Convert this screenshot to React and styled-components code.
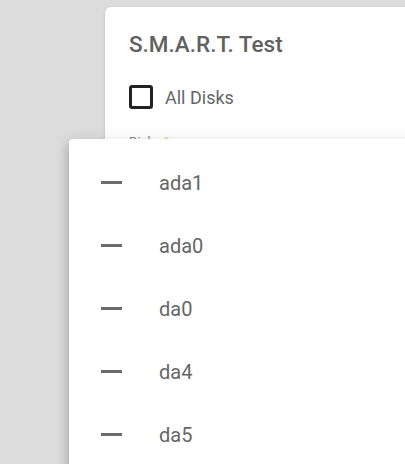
import React from "react";
import styled, { createGlobalStyle } from "styled-components";

const GlobalStyle = createGlobalStyle`
  html, body {
    margin: 0;
    padding: 0;
    background: #dcdcdc;
    font-family: Roboto, "Liberation Sans", sans-serif;
    overflow: hidden;
  }
`;

const Page = styled.div`
  position: relative;
  width: 405px;
  height: 464px;
  padding: 7px 0 0 105px;
  box-sizing: border-box;
  overflow: hidden;
`;

const Card = styled.div`
  background: #fff;
  border-radius: 6px 0 0 0;
  height: 500px;
  padding: 23px 24px 0 24px;
  box-sizing: border-box;
  box-shadow: 0 1px 3px rgba(0, 0, 0, 0.15);
`;

const Title = styled.h2`
  margin: 0;
  font-size: 22.5px;
  font-weight: 500;
  color: #616161;
  line-height: 28px;
`;

const CheckRow = styled.label`
  display: flex;
  align-items: center;
  gap: 12px;
  margin-top: 27px;
  font-size: 18px;
  color: #666;
`;

const Box = styled.span`
  width: 18px;
  height: 18px;
  border: 3px solid #222;
  border-radius: 3px;
`;

const FieldLabel = styled.div`
  margin-top: 25px;
  font-size: 13px;
  color: #888;
`;

const Star = styled.span`
  color: #f0b400;
  margin-left: 3px;
`;

const Menu = styled.div`
  position: absolute;
  left: 69px;
  top: 139px;
  right: -10px;
  bottom: -10px;
  background: #fff;
  border-radius: 4px 0 0 0;
  box-shadow: 0 5px 5px -3px rgba(0, 0, 0, 0.2), 0 8px 10px 1px rgba(0, 0, 0, 0.14),
    0 3px 14px 2px rgba(0, 0, 0, 0.12);
  padding-top: 12px;
`;

const Item = styled.div`
  display: flex;
  align-items: center;
  height: 63px;
  padding-left: 32px;
  font-size: 20px;
  color: #666;
`;

const Dash = styled.span`
  width: 21px;
  height: 3px;
  background: #6b6b6b;
  margin-right: 37px;
`;

const disks = ["ada1", "ada0", "da0", "da4", "da5"];

export default function App() {
  return (
    <>
      <GlobalStyle />
      <Page>
        <Card>
          <Title>S.M.A.R.T. Test</Title>
          <CheckRow>
            <Box />
            All Disks
          </CheckRow>
          <FieldLabel>
            Disks<Star>*</Star>
          </FieldLabel>
        </Card>
        <Menu>
          {disks.map((d) => (
            <Item key={d}>
              <Dash />
              {d}
            </Item>
          ))}
        </Menu>
      </Page>
    </>
  );
}
